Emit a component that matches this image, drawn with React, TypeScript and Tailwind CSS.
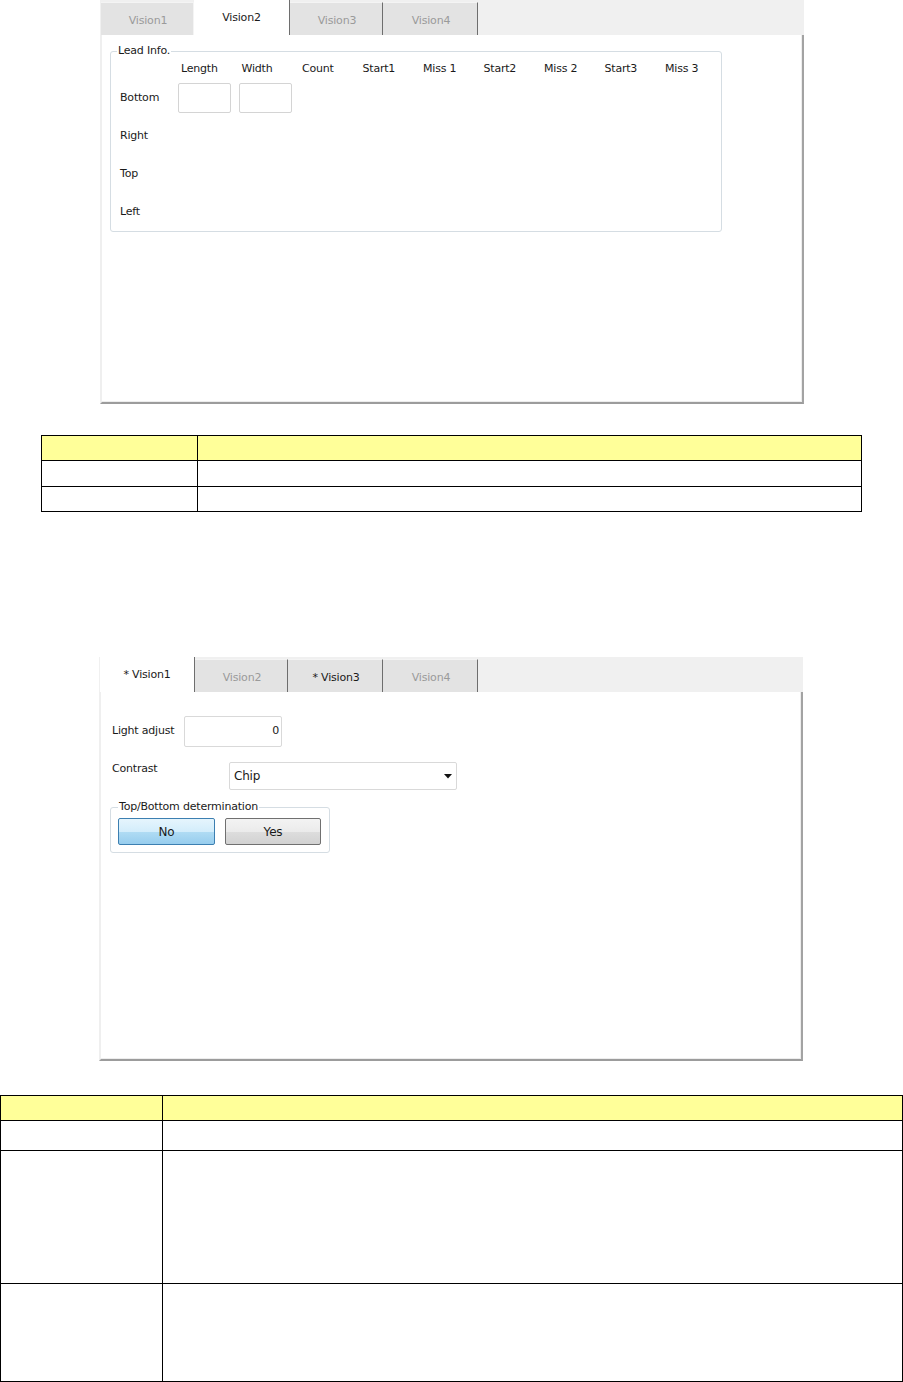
import React from 'react';

type TabDef = { label: string; active?: boolean; dim?: boolean; noEdge?: boolean; w: number };

function TabBar({ tabs }: { tabs: TabDef[] }) {
  return (
    <div className="flex h-[35px] items-end bg-[#f0f0f0] pl-[1px]">
      {tabs.map((t) => (
        <div
          key={t.label}
          style={{ width: t.w }}
          className={
            t.active
              ? 'flex h-[35px] items-center justify-center bg-white pt-[2px] text-[#1a1a1a] border-r border-r-[#6e6e6e]'
              : `flex h-[33px] items-center justify-center bg-[#e3e3e3] pt-[4px] pl-[2px] border-t border-t-[#f4f4f4] ${t.noEdge ? 'border-r border-r-[#f4f4f4]' : 'border-r border-r-[#6e6e6e]'} ${t.dim ? 'text-[#9a9a9a]' : 'text-[#1a1a1a]'}`
          }
        >
          {t.label}
        </div>
      ))}
    </div>
  );
}

function Panel({ tabs, children }: { tabs: TabDef[]; children: React.ReactNode }) {
  return (
    <div className="w-[704px]">
      <TabBar tabs={tabs} />
      <div className="flow-root h-[369px] bg-white border-l-2 border-l-[#efefef] border-r-2 border-r-[#a3a3a3] border-b-2 border-b-[#9c9c9c] shadow-[inset_-1px_-1px_0_#ededed]">
        {children}
      </div>
    </div>
  );
}

const heads = ['Length', 'Width', 'Count', 'Start1', 'Miss 1', 'Start2', 'Miss 2', 'Start3', 'Miss 3'];
const sides = ['Bottom', 'Right', 'Top', 'Left'];

function LeadInfo() {
  return (
    <div className="relative ml-[8px] mt-[16px] h-[181px] w-[612px] rounded-[3px] border border-[#d5dde3]">
      <span className="absolute left-[6px] top-[-8px] bg-white px-[1px] leading-[14px]">Lead Info.</span>
      <div className="grid grid-cols-[58px_repeat(9,60.5px)] grid-rows-[20px_repeat(4,38px)] pl-[9px] pt-[7px]">
        <div />
        {heads.map((h) => (
          <div key={h} className="flex items-center pl-[3px]">{h}</div>
        ))}
        {sides.map((s) => (
          <React.Fragment key={s}>
            <div className="flex items-center">{s}</div>
            {s === 'Bottom' ? (
              <>
                <div className="flex items-center pb-[1px]">
                  <div className="h-[30px] w-[53px] rounded-[2px] border border-[#d4d4d4] bg-white" />
                </div>
                <div className="flex items-center pb-[1px]">
                  <div className="h-[30px] w-[53px] rounded-[2px] border border-[#d4d4d4] bg-white" />
                </div>
                <div className="col-span-7" />
              </>
            ) : (
              <div className="col-span-9" />
            )}
          </React.Fragment>
        ))}
      </div>
    </div>
  );
}

function VisionForm() {
  return (
    <div className="pl-[9px] pt-[24px]">
      <div className="flex h-[31px] items-center">
        <span className="w-[74px] pl-[2px]">Light adjust</span>
        <div className="flex h-[31px] w-[98px] items-center justify-end rounded-[2px] border border-[#d9d9d9] pr-[2px]">0</div>
      </div>
      <div className="mt-[15px] flex h-[28px] items-start">
        <span className="w-[119px] pl-[2px] leading-[14px]">Contrast</span>
        <div className="flex h-[28px] w-[228px] items-center justify-between rounded-[2px] border border-[#d9d9d9] pl-[4px] pr-[4px] text-[12px]">
          <span>Chip</span>
          <svg width="8" height="5" viewBox="0 0 8 5"><path d="M0 0h8L4 4.5z" fill="#111" /></svg>
        </div>
      </div>
      <div className="relative mt-[17px] flex h-[46px] w-[220px] gap-[10px] rounded-[3px] border border-[#d5dde3] pl-[7px] pt-[10px]">
        <span className="absolute left-[7px] top-[-8px] bg-white px-[1px] leading-[14px]">Top/Bottom determination</span>
        <div className="flex h-[27px] w-[97px] items-center justify-center rounded-[2px] border border-[#3c7fb1] bg-[linear-gradient(#e6f5fd_0%,#d3edfb_50%,#b0dcf4_51%,#97cdee_100%)] text-[12px]">No</div>
        <div className="flex h-[27px] w-[96px] items-center justify-center rounded-[2px] border border-[#707070] bg-[linear-gradient(#f3f3f3_0%,#ebebeb_50%,#dddddd_51%,#d2d2d2_100%)] text-[12px]">Yes</div>
      </div>
    </div>
  );
}

function Sheet({ widths, rows, cls }: { widths: [number, number]; rows: number[]; cls: string }) {
  return (
    <table className={`border-collapse ${cls}`}>
      <tbody>
        {rows.map((h, i) => (
          <tr key={i} style={{ height: h }}>
            <td style={{ width: widths[0] }} className={`border border-black ${i === 0 ? 'bg-[#ffff99]' : ''}`} />
            <td style={{ width: widths[1] }} className={`border border-black ${i === 0 ? 'bg-[#ffff99]' : ''}`} />
          </tr>
        ))}
      </tbody>
    </table>
  );
}

export default function App() {
  return (
    <div className="h-[1382px] w-[903px] bg-white text-[11px] text-[#1a1a1a] font-['DejaVu_Sans',sans-serif] tracking-[-0.2px]">
      <div className="pl-[100px]">
        <Panel
          tabs={[
            { label: 'Vision1', dim: true, noEdge: true, w: 93 },
            { label: 'Vision2', active: true, w: 96 },
            { label: 'Vision3', dim: true, w: 93 },
            { label: 'Vision4', dim: true, w: 95 },
          ]}
        >
          <LeadInfo />
        </Panel>
      </div>

      <div className="mt-[31px] pl-[41px]">
        <Sheet widths={[156, 664]} rows={[25, 26, 25]} cls="w-[821px]" />
      </div>

      <div className="mt-[145px] pl-[99px]">
        <Panel
          tabs={[
            { label: '* Vision1', active: true, w: 95 },
            { label: 'Vision2', dim: true, w: 93 },
            { label: '* Vision3', w: 95 },
            { label: 'Vision4', dim: true, w: 95 },
          ]}
        >
          <VisionForm />
        </Panel>
      </div>

      <div className="mt-[34px]">
        <Sheet widths={[162, 741]} rows={[25, 30, 133, 98]} cls="w-[903px]" />
      </div>
    </div>
  );
}
